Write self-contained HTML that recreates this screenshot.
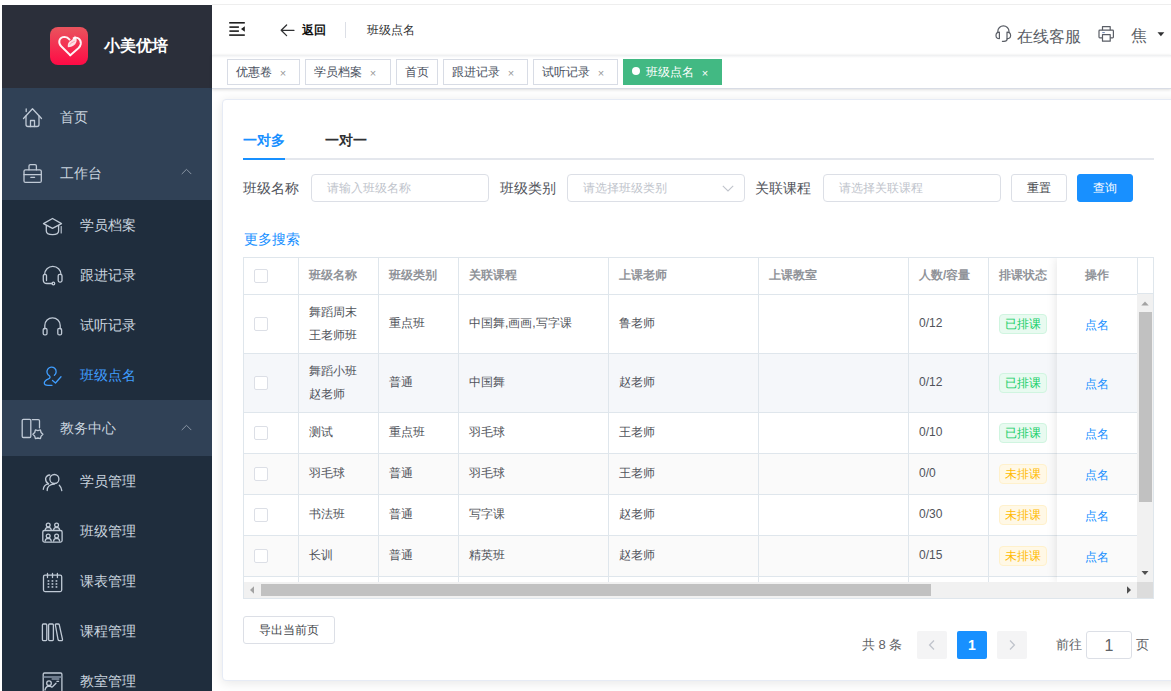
<!DOCTYPE html>
<html><head><meta charset="utf-8">
<style>
*{box-sizing:border-box;margin:0;padding:0}
html,body{width:1171px;height:691px;overflow:hidden;background:#fff;font-family:"Liberation Sans",sans-serif;}
.abs{position:absolute}
#side{position:absolute;left:2px;top:5px;width:210px;height:686px;background:#304156;overflow:hidden}
#logo{position:absolute;left:0;top:0;width:210px;height:83px;background:#2b2f3a}
.logoicon{position:absolute;left:48px;top:22px;width:38px;height:38px;border-radius:8px;background:linear-gradient(#e9545d,#ff0a45)}
.logotext{position:absolute;left:102px;top:30px;font-size:16px;font-weight:bold;color:#fff;line-height:22px;white-space:nowrap}
.mi{position:absolute;left:0;width:210px;color:#bfcbd9;font-size:14px;white-space:nowrap}
.mi .t{position:absolute;line-height:20px}
.mi svg{position:absolute}
.sub{position:absolute;left:0;width:210px;background:#1f2d3d}
#hdr{position:absolute;left:212px;top:4px;width:959px;height:51px;background:#fff;border-top:1px solid #eee}
#tags{position:absolute;left:212px;top:55px;width:959px;height:34px;background:#fff;border-bottom:1px solid #d8dce5;box-shadow:0 1px 3px 0 rgba(0,0,0,.12),0 0 3px 0 rgba(0,0,0,.04)}
.tag{position:absolute;top:4px;height:26px;line-height:24px;border:1px solid #d8dce5;color:#495060;background:#fff;padding:0 8px;font-size:12px;white-space:nowrap}
.tag .x{display:inline-block;width:16px;text-align:center;margin-left:3px;color:#999;font-size:11px;position:relative;top:1px}
.tag.act{background:#42b983;border-color:#42b983;color:#fff}
.tag.act:before{content:"";display:inline-block;width:8px;height:8px;border-radius:50%;background:#fff;margin-right:6px;position:relative;top:-1px}
.tag.act .x{color:#fff}
#card{position:absolute;left:222px;top:99px;width:1000px;height:582px;background:#fff;border:1px solid #e6ebf5;border-radius:4px;box-shadow:0 2px 12px 0 rgba(0,0,0,.1)}
#sidetext .mt{position:absolute;font-size:14px;line-height:20px;color:#cad4df;white-space:nowrap}
#sidetext .mt.act{color:#409eff}
#sideicons{position:absolute;left:0;top:0}
.tabt{position:absolute;font-size:14px;line-height:20px;font-weight:bold;color:#303133;white-space:nowrap}
.tabt.act{color:#1890ff}
.flabel{position:absolute;font-size:14px;line-height:20px;color:#50535a;white-space:nowrap}
.inp{position:absolute;height:28px;border:1px solid #dcdfe6;border-radius:4px;background:#fff}
.inp .ph{position:absolute;left:15px;top:5px;font-size:12px;line-height:17px;color:#c0c4cc;white-space:nowrap}
.btn{position:absolute;width:56px;height:28px;border:1px solid #dcdfe6;border-radius:3px;background:#fff;color:#45484d;font-size:12px;line-height:26px;text-align:center;white-space:nowrap}
.btn.pri{background:#1890ff;border-color:#1890ff;color:#fff}
#tbl{position:absolute;left:243px;top:257px;width:911px;height:342px;border:1px solid #dfe6ec;overflow:hidden;background:#fff}
.hrow,.brow{position:absolute;left:0;width:1000px;border-bottom:1px solid #dfe6ec}
.hrow .c,.brow .c{position:absolute;top:0;border-right:1px solid #dfe6ec}
.ht{position:absolute;left:10px;top:9px;font-size:12px;line-height:17px;font-weight:bold;color:#909399;white-space:nowrap}
.tx{position:absolute;left:10px;font-size:12px;line-height:23px;color:#50535a;white-space:nowrap}
.cb{position:absolute;left:10px;width:14px;height:14px;border:1px solid #dcdfe6;border-radius:2px;background:#fff}
.tag2{position:absolute;left:10px;height:20px;padding:0 5px;border:1px solid;border-radius:4px;font-size:12px;line-height:18px;white-space:nowrap}
.tg{background:#e8faf0;border-color:#d0f5e0;color:#13ce66}
.to{background:#fff8e6;border-color:#fff1cc;color:#ffba00}
#fixr{position:absolute;left:1057px;top:258px;width:80px;height:324px;overflow:hidden;box-shadow:0 0 10px rgba(0,0,0,.12);clip-path:inset(0 0 -10px -12px)}
.fc{position:absolute;left:0;width:80px;border-bottom:1px solid #dfe6ec;text-align:center}
.fc .ht{position:static;display:inline-block;margin-top:9px}
.lk{position:relative;display:inline-block;font-size:12px;line-height:23px;color:#1890ff}
.pg{font-size:13px;line-height:18px;color:#606266;white-space:nowrap}
.pbtn{position:absolute;top:631px;width:30px;height:28px;background:#f4f4f5;border-radius:2px;font-size:14px;font-weight:bold;line-height:28px;text-align:center;color:#606266}
.pbtn.act{background:#1890ff;color:#fff}
</style></head><body>
<div id="side">
  <div id="logo">
    <div class="logoicon"></div>
    <div class="logotext">小美优培</div>
  </div>
  <div class="sub" style="top:195px;height:200px"></div>
  <div class="sub" style="top:451px;height:240px"></div>
</div>
<div id="sidetext">
  <div class="mt" style="left:60px;top:107px">首页</div>
  <div class="mt" style="left:60px;top:163px">工作台</div>
  <div class="mt" style="left:80px;top:215px">学员档案</div>
  <div class="mt" style="left:80px;top:265px">跟进记录</div>
  <div class="mt" style="left:80px;top:315px">试听记录</div>
  <div class="mt act" style="left:80px;top:365px">班级点名</div>
  <div class="mt" style="left:60px;top:418px">教务中心</div>
  <div class="mt" style="left:80px;top:471px">学员管理</div>
  <div class="mt" style="left:80px;top:521px">班级管理</div>
  <div class="mt" style="left:80px;top:571px">课表管理</div>
  <div class="mt" style="left:80px;top:621px">课程管理</div>
  <div class="mt" style="left:80px;top:671px">教室管理</div>
</div>
<svg id="sideicons" width="212" height="691" viewBox="0 0 212 691" fill="none" stroke="#c0cad6" stroke-width="1.3" stroke-linecap="round" stroke-linejoin="round">
  <!-- home -->
  <path d="M23.5 118.5 L32.5 108.8 L41.5 118.5"/>
  <path d="M26 116 V124.5 Q26 126.5 28 126.5 H37 Q39 126.5 39 124.5 V116"/>
  <path d="M30.5 126.5 V120.5 H34.5 V126.5"/>
  <path d="M26.2 111.5 V109" />
  <!-- briefcase -->
  <rect x="24" y="169.8" width="17.3" height="12.6" rx="1.5"/>
  <path d="M29 169.8 V166 Q29 164.6 30.4 164.6 H35 Q36.4 164.6 36.4 166 V169.8"/>
  <path d="M24 174.6 H41.3"/>
  <path d="M30.8 177.3 H34.6"/>
    <path d="M182 173.8 L186.5 169.3 L191 173.8" stroke="#8a96a5" stroke-width="1"/>
  <path d="M182 429.8 L186.5 425.3 L191 429.8" stroke="#8a96a5" stroke-width="1"/>
  <!-- graduation cap -->
  <path d="M43.5 223.6 L52.5 218.5 L61.5 223.6 L52.5 228.4 Z"/>
  <path d="M46.3 225.3 V231 Q46.3 234.6 52.5 234.6 Q58.6 234.6 58.6 231 V225.3"/>
  <path d="M61.2 226.5 V233" stroke-width="1.1"/>
  <!-- headset -->
  <path d="M44.6 274.5 A8.2 8.2 0 0 1 61 274.5"/>
  <path d="M46.5 280.5 V275.5 Q46.5 274.3 45 274.3 Q43.3 274.3 43.3 275.5 V280 Q43.3 283.5 47 283.5 H52"/>
  <circle cx="53.4" cy="283.5" r="1.3"/>
  <rect x="58.2" y="274.3" width="3.8" height="7.8" rx="1.5"/>
  <!-- headphones -->
  <path d="M44.8 329 V325.5 A7.7 7.7 0 0 1 60.2 325.5 V329"/>
  <rect x="43.2" y="328.3" width="3.8" height="6.6" rx="1.5"/>
  <rect x="57.8" y="328.3" width="3.8" height="6.6" rx="1.5"/>
  <!-- person check active -->
  <g stroke="#409eff">
  <path d="M54.4 375.3 A4.6 4.6 0 1 0 49.5 375.8 Q51 377.6 48.5 378.8 Q44.3 380.6 44.3 383 Q44.3 385.3 48 385.3 H52"/>
  <path d="M52.5 380.5 L55.5 383 L61 376.8"/>
  </g>
  <!-- jiaowu center -->
  <rect x="22.2" y="419.3" width="8.6" height="18.2" rx="1.2"/>
  <path d="M32.3 419.6 H38.3 Q39.5 419.6 39.5 420.8 V427.8"/>
  <path d="M42.90 434.30 L41.10 436.15 L40.40 438.63 L37.90 438.00 L35.40 438.63 L34.70 436.15 L32.90 434.30 L34.70 432.45 L35.40 429.97 L37.90 430.60 L40.40 429.97 L41.10 432.45 Z"/>
  <!-- students manage -->
  <circle cx="54.4" cy="479" r="4.5"/>
  <path d="M47.2 490.6 Q47.2 484.3 54.4 484.1"/>
  <path d="M59.3 485.3 Q61.6 487.6 61.8 490.6"/>
  <path d="M49.8 475 Q46.3 475.2 45.6 478.7 Q45.5 482.2 48.6 483.8"/>
  <path d="M43.3 489.3 Q43.8 484.8 48.4 483.9"/>
  <!-- class manage -->
  <rect x="42.8" y="530.5" width="19.3" height="11.6" rx="1.5"/>
  <circle cx="48.2" cy="525" r="1.9"/>
  <circle cx="56.6" cy="525" r="1.9"/>
  <path d="M45.2 529.8 Q45.5 527.5 48.2 527.4 Q50.9 527.5 51.2 529.8"/>
  <path d="M53.6 529.8 Q53.9 527.5 56.6 527.4 Q59.3 527.5 59.6 529.8"/>
  <circle cx="48.2" cy="536" r="1.9"/>
  <circle cx="56.6" cy="536" r="1.9"/>
  <path d="M45.2 541 Q45.5 538.5 48.2 538.4 Q50.9 538.5 51.2 541"/>
  <path d="M53.6 541 Q53.9 538.5 56.6 538.4 Q59.3 538.5 59.6 541"/>
  <!-- calendar -->
  <rect x="43.5" y="575.2" width="18.2" height="16.4" rx="1.5"/>
  <path d="M47.5 573.4 V577.6 M52.5 573.4 V577.6 M57.4 573.4 V577.6"/>
  <g fill="#b4bfcc" stroke="none">
   <rect x="47.6" y="580.1" width="1.7" height="1.7"/><rect x="51.6" y="580.1" width="1.7" height="1.7"/><rect x="55.6" y="580.1" width="1.7" height="1.7"/>
   <rect x="47.6" y="583.1" width="1.7" height="1.7"/><rect x="51.6" y="583.1" width="1.7" height="1.7"/><rect x="55.6" y="583.1" width="1.7" height="1.7"/>
   <rect x="47.6" y="586.1" width="1.7" height="1.7"/><rect x="51.6" y="586.1" width="1.7" height="1.7"/><rect x="55.6" y="586.1" width="1.7" height="1.7"/>
  </g>
  <!-- books -->
  <rect x="42.4" y="624" width="4.4" height="16.6" rx="1"/>
  <rect x="48.6" y="624" width="4.8" height="16.6" rx="1"/>
  <path d="M55.3 624.5 Q55.6 623.9 56.5 624 H58.2 Q59 624 59.3 624.8 L62.5 639.4 Q62.6 640.6 61.5 640.6 H59.3 Q58.4 640.6 58.1 639.8 Z"/>
  <!-- classroom -->
  <path d="M43.2 691 V674.3 Q43.2 673 44.5 673 H60.6 Q61.9 673 61.9 674.3 V691"/>
  <path d="M44 677 H61.2" stroke-width="1.5" stroke="#8794a6"/>
  <path d="M52.2 679 H58.8" stroke-width="1.5" stroke="#8794a6"/>
  <circle cx="49" cy="683.2" r="2.3"/>
  <path d="M45 690 Q46 686.2 49 686 Q50.5 686 51.5 687 Q52.3 687.2 53 686.3 L56 683.3"/>
  <path d="M56.9 681.3 H58.6" stroke-width="1.3"/>
</svg>
<div id="hdr"></div>
<svg class="abs" style="left:0;top:0" width="1171" height="60" viewBox="0 0 1171 60" fill="none">
  <!-- logo heart -->
  <path d="M70.3 55.3 L61.2 46.3 Q58.6 43.4 59.4 40.4 Q60.7 37 64.6 36.9 Q67.6 37 69.6 39.6" stroke="#fff" stroke-width="1.9" stroke-linecap="round" stroke-linejoin="round" opacity=".95"/>
  <path d="M73.6 38.2 Q76.2 36.9 78.6 38.5 Q81.3 40.6 80.8 44 Q80.4 46.1 78.6 48 L70.3 55.3" stroke="#fff" stroke-width="1.9" stroke-linecap="round" stroke-linejoin="round" opacity=".95"/>
  <path d="M67.8 47.2 Q67.2 42.2 71.2 40.4 Q74.4 39 74.9 35.6 Q78.4 40.4 75.2 44.2 Q72.4 47.2 67.8 47.2 Z" fill="#fff" opacity=".85"/><path d="M69.5 44.8 Q71.5 42.3 74.8 41.2" stroke="#f03a5a" stroke-width=".7" opacity=".6"/>
  <!-- hamburger -->
  <g fill="#1f1f1f">
    <rect x="229.2" y="22" width="15.6" height="1.6"/>
    <rect x="229.4" y="26.3" width="9.5" height="1.6"/>
    <rect x="229.4" y="30.3" width="9.5" height="1.6"/>
    <rect x="229.2" y="34.3" width="15.6" height="1.6"/>
    <path d="M241 29 L244.8 26.2 V31.8 Z"/>
  </g>
  <!-- back arrow -->
  <path d="M286.6 25 L281.2 30.3 L286.6 35.6 M281.2 30.3 H294" stroke="#303133" stroke-width="1.3" stroke-linecap="round" stroke-linejoin="round"/>
  <rect x="345" y="22" width="1" height="16" fill="#dcdfe6"/>
  <!-- headset -->
  <g stroke="#5a5e66" stroke-width="1.2" stroke-linecap="round" stroke-linejoin="round">
    <path d="M997.8 32.5 V31.5 A5.6 5.6 0 0 1 1009 31.5 V32.5"/>
    <path d="M999.4 32.2 V38.6 Q996 38.6 996 35.4 Q996 32.2 999.4 32.2 Z"/>
    <path d="M1007 32.2 V38.6 Q1010.6 38.6 1010.6 35.4 Q1010.6 32.2 1007 32.2 Z"/>
    <path d="M1007.3 38.6 Q1007 41.3 1004 41.3 H1002.4"/>
  </g>
  <!-- printer -->
  <g stroke="#5a5e66" stroke-width="1.2" stroke-linejoin="round">
    <path d="M1102.5 30.2 V26.6 H1110.2 V30.2"/>
    <path d="M1102.5 37.9 H1099.8 Q1099 37.9 1099 37.1 V31 Q1099 30.2 1099.8 30.2 H1112.6 Q1113.4 30.2 1113.4 31 V37.1 Q1113.4 37.9 1112.6 37.9 H1110.2"/>
    <path d="M1102.5 34.6 H1110.2 V41.2 H1102.5 Z"/>
  </g>
  <path d="M1102.3 32.6 H1104.8" stroke="#6d87b3" stroke-width="1"/>
  <path d="M1157.5 32.2 H1164.3 L1160.9 36.3 Z" fill="#303133"/>
</svg>
<div class="abs" style="left:302px;top:22px;font-size:12px;font-weight:bold;color:#111;line-height:17px">返回</div>
<div class="abs" style="left:367px;top:22px;font-size:12px;color:#303133;line-height:17px">班级点名</div>
<div class="abs" style="left:1017px;top:27px;font-size:16px;color:#5a5e66;line-height:20px;white-space:nowrap">在线客服</div>
<div class="abs" style="left:1131px;top:26px;font-size:16px;color:#5a5e66;line-height:20px">焦</div>
<div id="tags">
  <div class="tag" style="left:15px;width:73px">优惠卷<span class="x">×</span></div>
  <div class="tag" style="left:93px;width:86px">学员档案<span class="x">×</span></div>
  <div class="tag" style="left:184px;width:42px">首页</div>
  <div class="tag" style="left:231px;width:85px">跟进记录<span class="x">×</span></div>
  <div class="tag" style="left:321px;width:85px">试听记录<span class="x">×</span></div>
  <div class="tag act" style="left:411px;width:99px">班级点名<span class="x">×</span></div>
</div>
<div class="abs" style="left:212px;top:55px;width:959px;height:3px;background:linear-gradient(rgba(0,21,41,.07),rgba(0,21,41,0))"></div>
<div id="card"></div>
<div class="tabt act" style="left:243px;top:130px">一对多</div>
<div class="tabt" style="left:325px;top:130px">一对一</div>
<div class="abs" style="left:243px;top:158px;width:911px;height:2px;background:#e4e7ed"></div>
<div class="abs" style="left:243px;top:158px;width:42px;height:2px;background:#1890ff"></div>
<div class="flabel" style="left:243px;top:178px">班级名称</div>
<div class="inp" style="left:311px;top:174px;width:178px"><span class="ph">请输入班级名称</span></div>
<div class="flabel" style="left:500px;top:178px">班级类别</div>
<div class="inp" style="left:567px;top:174px;width:178px"><span class="ph">请选择班级类别</span>
<svg class="abs" style="left:154px;top:10px" width="12" height="7" viewBox="0 0 12 7"><path d="M0.8 0.8 L6 6 L11.2 0.8" fill="none" stroke="#c0c4cc" stroke-width="1.1"/></svg></div>
<div class="flabel" style="left:755px;top:178px">关联课程</div>
<div class="inp" style="left:823px;top:174px;width:178px"><span class="ph">请选择关联课程</span></div>
<div class="btn" style="left:1011px;top:174px">重置</div>
<div class="btn pri" style="left:1077px;top:174px">查询</div>
<div class="abs" style="left:244px;top:229px;font-size:14px;line-height:20px;color:#1890ff">更多搜索</div>
<div id="tbl">
<div class="hrow" style="top:0;height:37px">
<div class="c" style="left:0px;width:55px;height:37px"><i class="cb" style="top:11px"></i></div>
<div class="c" style="left:55px;width:80px;height:37px"><span class="ht">班级名称</span></div>
<div class="c" style="left:135px;width:80px;height:37px"><span class="ht">班级类别</span></div>
<div class="c" style="left:215px;width:150px;height:37px"><span class="ht">关联课程</span></div>
<div class="c" style="left:365px;width:150px;height:37px"><span class="ht">上课老师</span></div>
<div class="c" style="left:515px;width:150px;height:37px"><span class="ht">上课教室</span></div>
<div class="c" style="left:665px;width:80px;height:37px"><span class="ht">人数/容量</span></div>
<div class="c" style="left:745px;width:80px;height:37px"><span class="ht">排课状态</span></div>
</div>
<div class="brow" style="top:37px;height:59px;background:#fff">
<div class="c" style="left:0px;width:55px;height:59px"><i class="cb" style="top:22px"></i></div>
<div class="c" style="left:55px;width:80px;height:59px"><div class="tx" style="top:6px">舞蹈周末<br>王老师班</div></div>
<div class="c" style="left:135px;width:80px;height:59px"><div class="tx" style="top:17px">重点班</div></div>
<div class="c" style="left:215px;width:150px;height:59px"><div class="tx" style="top:17px">中国舞,画画,写字课</div></div>
<div class="c" style="left:365px;width:150px;height:59px"><div class="tx" style="top:17px">鲁老师</div></div>
<div class="c" style="left:515px;width:150px;height:59px"><div class="tx" style="top:17px"></div></div>
<div class="c" style="left:665px;width:80px;height:59px"><div class="tx" style="top:17px">0/12</div></div>
<div class="c" style="left:745px;width:80px;height:59px"><span class="tag2 tg" style="top:19px">已排课</span></div>
</div>
<div class="brow" style="top:96px;height:59px;background:#f5f7fa">
<div class="c" style="left:0px;width:55px;height:59px"><i class="cb" style="top:22px"></i></div>
<div class="c" style="left:55px;width:80px;height:59px"><div class="tx" style="top:6px">舞蹈小班<br>赵老师</div></div>
<div class="c" style="left:135px;width:80px;height:59px"><div class="tx" style="top:17px">普通</div></div>
<div class="c" style="left:215px;width:150px;height:59px"><div class="tx" style="top:17px">中国舞</div></div>
<div class="c" style="left:365px;width:150px;height:59px"><div class="tx" style="top:17px">赵老师</div></div>
<div class="c" style="left:515px;width:150px;height:59px"><div class="tx" style="top:17px"></div></div>
<div class="c" style="left:665px;width:80px;height:59px"><div class="tx" style="top:17px">0/12</div></div>
<div class="c" style="left:745px;width:80px;height:59px"><span class="tag2 tg" style="top:19px">已排课</span></div>
</div>
<div class="brow" style="top:155px;height:41px;background:#fff">
<div class="c" style="left:0px;width:55px;height:41px"><i class="cb" style="top:13px"></i></div>
<div class="c" style="left:55px;width:80px;height:41px"><div class="tx" style="top:8px">测试</div></div>
<div class="c" style="left:135px;width:80px;height:41px"><div class="tx" style="top:8px">重点班</div></div>
<div class="c" style="left:215px;width:150px;height:41px"><div class="tx" style="top:8px">羽毛球</div></div>
<div class="c" style="left:365px;width:150px;height:41px"><div class="tx" style="top:8px">王老师</div></div>
<div class="c" style="left:515px;width:150px;height:41px"><div class="tx" style="top:8px"></div></div>
<div class="c" style="left:665px;width:80px;height:41px"><div class="tx" style="top:8px">0/10</div></div>
<div class="c" style="left:745px;width:80px;height:41px"><span class="tag2 tg" style="top:10px">已排课</span></div>
</div>
<div class="brow" style="top:196px;height:41px;background:#fafafa">
<div class="c" style="left:0px;width:55px;height:41px"><i class="cb" style="top:13px"></i></div>
<div class="c" style="left:55px;width:80px;height:41px"><div class="tx" style="top:8px">羽毛球</div></div>
<div class="c" style="left:135px;width:80px;height:41px"><div class="tx" style="top:8px">普通</div></div>
<div class="c" style="left:215px;width:150px;height:41px"><div class="tx" style="top:8px">羽毛球</div></div>
<div class="c" style="left:365px;width:150px;height:41px"><div class="tx" style="top:8px">王老师</div></div>
<div class="c" style="left:515px;width:150px;height:41px"><div class="tx" style="top:8px"></div></div>
<div class="c" style="left:665px;width:80px;height:41px"><div class="tx" style="top:8px">0/0</div></div>
<div class="c" style="left:745px;width:80px;height:41px"><span class="tag2 to" style="top:10px">未排课</span></div>
</div>
<div class="brow" style="top:237px;height:41px;background:#fff">
<div class="c" style="left:0px;width:55px;height:41px"><i class="cb" style="top:13px"></i></div>
<div class="c" style="left:55px;width:80px;height:41px"><div class="tx" style="top:8px">书法班</div></div>
<div class="c" style="left:135px;width:80px;height:41px"><div class="tx" style="top:8px">普通</div></div>
<div class="c" style="left:215px;width:150px;height:41px"><div class="tx" style="top:8px">写字课</div></div>
<div class="c" style="left:365px;width:150px;height:41px"><div class="tx" style="top:8px">赵老师</div></div>
<div class="c" style="left:515px;width:150px;height:41px"><div class="tx" style="top:8px"></div></div>
<div class="c" style="left:665px;width:80px;height:41px"><div class="tx" style="top:8px">0/30</div></div>
<div class="c" style="left:745px;width:80px;height:41px"><span class="tag2 to" style="top:10px">未排课</span></div>
</div>
<div class="brow" style="top:278px;height:41px;background:#fafafa">
<div class="c" style="left:0px;width:55px;height:41px"><i class="cb" style="top:13px"></i></div>
<div class="c" style="left:55px;width:80px;height:41px"><div class="tx" style="top:8px">长训</div></div>
<div class="c" style="left:135px;width:80px;height:41px"><div class="tx" style="top:8px">普通</div></div>
<div class="c" style="left:215px;width:150px;height:41px"><div class="tx" style="top:8px">精英班</div></div>
<div class="c" style="left:365px;width:150px;height:41px"><div class="tx" style="top:8px">赵老师</div></div>
<div class="c" style="left:515px;width:150px;height:41px"><div class="tx" style="top:8px"></div></div>
<div class="c" style="left:665px;width:80px;height:41px"><div class="tx" style="top:8px">0/15</div></div>
<div class="c" style="left:745px;width:80px;height:41px"><span class="tag2 to" style="top:10px">未排课</span></div>
</div>
<div class="brow" style="top:319px;height:41px;background:#fff">
<div class="c" style="left:0px;width:55px;height:41px"><i class="cb" style="top:13px"></i></div>
<div class="c" style="left:55px;width:80px;height:41px"><div class="tx" style="top:8px">成人</div></div>
<div class="c" style="left:135px;width:80px;height:41px"><div class="tx" style="top:8px">普通</div></div>
<div class="c" style="left:215px;width:150px;height:41px"><div class="tx" style="top:8px">精英班</div></div>
<div class="c" style="left:365px;width:150px;height:41px"><div class="tx" style="top:8px">赵老师</div></div>
<div class="c" style="left:515px;width:150px;height:41px"><div class="tx" style="top:8px"></div></div>
<div class="c" style="left:665px;width:80px;height:41px"><div class="tx" style="top:8px">0/15</div></div>
<div class="c" style="left:745px;width:80px;height:41px"><span class="tag2 to" style="top:10px">未排课</span></div>
</div>
</div>
<div id="fixr">
<div class="fc" style="top:0;height:37px;background:#fff"><span class="ht">操作</span></div>
<div class="fc" style="top:37px;height:59px;background:#fff"><span class="lk" style="top:19px">点名</span></div>
<div class="fc" style="top:96px;height:59px;background:#f5f7fa"><span class="lk" style="top:19px">点名</span></div>
<div class="fc" style="top:155px;height:41px;background:#fff"><span class="lk" style="top:10px">点名</span></div>
<div class="fc" style="top:196px;height:41px;background:#fafafa"><span class="lk" style="top:10px">点名</span></div>
<div class="fc" style="top:237px;height:41px;background:#fff"><span class="lk" style="top:10px">点名</span></div>
<div class="fc" style="top:278px;height:41px;background:#fafafa"><span class="lk" style="top:10px">点名</span></div>
<div class="fc" style="top:319px;height:41px;background:#fff"></div>
</div>
<div id="hsb" class="abs" style="left:244px;top:582px;width:893px;height:16px;background:#f1f1f1"></div>
<div class="abs" style="left:261px;top:584px;width:670px;height:12px;background:#c1c1c1"></div>
<svg class="abs" style="left:244px;top:582px" width="893" height="16" viewBox="0 0 893 16"><path d="M6 8 L10 4.3 V11.7 Z" fill="#a3a3a3"/><path d="M887 8 L883 4.3 V11.7 Z" fill="#505050"/></svg>
<div class="abs" style="left:1137px;top:582px;width:16px;height:16px;background:#dcdcdc"></div>
<div class="abs" style="left:1137px;top:258px;width:16px;height:36px;background:#fff;border-bottom:1px solid #dfe6ec;border-left:1px solid #dfe6ec"></div>
<div class="abs" style="left:1137px;top:294px;width:16px;height:288px;background:#f1f1f1"></div>
<div class="abs" style="left:1139px;top:312px;width:13px;height:190px;background:#c1c1c1"></div>
<svg class="abs" style="left:1137px;top:294px" width="16" height="288" viewBox="0 0 16 288"><path d="M8 7.5 L4.3 11.5 H11.7 Z" fill="#a3a3a3"/><path d="M8 281 L4.5 277 H11.5 Z" fill="#505050"/></svg>
<div class="btn" style="left:243px;top:616px;width:92px">导出当前页</div>
<div class="abs pg" style="left:862px;top:636px">共 8 条</div>
<div class="pbtn" style="left:917px"><svg width="30" height="28" viewBox="0 0 30 28"><path d="M17 9.5 L12.6 14 L17 18.5" fill="none" stroke="#c0c4cc" stroke-width="1.3"/></svg></div>
<div class="pbtn act" style="left:957px">1</div>
<div class="pbtn" style="left:997px"><svg width="30" height="28" viewBox="0 0 30 28"><path d="M13 9.5 L17.4 14 L13 18.5" fill="none" stroke="#c0c4cc" stroke-width="1.3"/></svg></div>
<div class="abs pg" style="left:1056px;top:636px">前往</div>
<div class="inp" style="left:1086px;top:631px;width:46px;height:28px;border-radius:3px;text-align:center;font-size:16px;line-height:28px;color:#606266">1</div>
<div class="abs pg" style="left:1136px;top:636px">页</div>
</body></html>
